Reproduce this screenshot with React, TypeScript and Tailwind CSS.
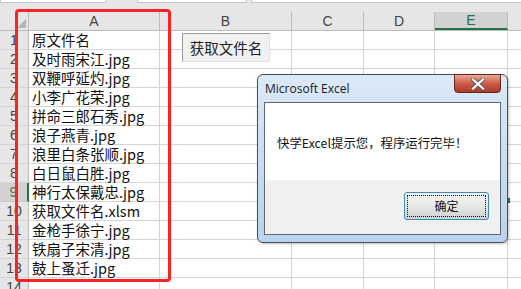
import React from 'react';

const rows = [
  '原文件名',
  '及时雨宋江.jpg',
  '双鞭呼延灼.jpg',
  '小李广花荣.jpg',
  '拼命三郎石秀.jpg',
  '浪子燕青.jpg',
  '浪里白条张顺.jpg',
  '白日鼠白胜.jpg',
  '神行太保戴忠.jpg',
  '获取文件名.xlsm',
  '金枪手徐宁.jpg',
  '铁扇子宋清.jpg',
  '鼓上蚤迁.jpg',
  '',
];

const cols = [
  { key: 'A', w: 'w-[131px]' },
  { key: 'B', w: 'w-[132px]' },
  { key: 'C', w: 'w-[72px]' },
  { key: 'D', w: 'w-[71px]' },
  { key: 'E', w: 'w-[73px]' },
];

function ColumnHeader() {
  return (
    <div className="flex h-[19px] border-b border-[#bcbcbc] bg-[#e6e6e6] text-[14px] text-[#444] font-['Liberation_Sans',sans-serif]">
      <div className="w-[29px] border-r border-[#bcbcbc] flex items-end justify-end pr-[2px] pb-[2px]">
        <svg width="9" height="9" viewBox="0 0 9 9">
          <polygon points="9,0 9,9 0,9" fill="#b4b4b4" />
        </svg>
      </div>
      {cols.map((c) =>
        c.key === 'E' ? (
          <div key={c.key} className={`${c.w} border-r border-[#bcbcbc] bg-[#d2d2d2] border-b-2 border-b-[#217346] text-[#217346] flex items-center justify-center`}>
            {c.key}
          </div>
        ) : (
          <div key={c.key} className={`${c.w} border-r border-[#bcbcbc] flex items-center justify-center`}>
            {c.key}
          </div>
        )
      )}
      <div className="flex-1" />
    </div>
  );
}

function Row({ n, text }: { n: number; text: string }) {
  const selected = n === 9;
  return (
    <div className="flex h-[19px]">
      <div
        className={
          selected
            ? "w-[29px] border-b border-[#c8c8c8] border-r-2 border-r-[#217346] bg-[#d2d2d2] text-[#52735f] flex items-center justify-center text-[14px] font-['Liberation_Sans',sans-serif]"
            : "w-[29px] border-b border-[#d4d4d4] border-r border-r-[#bcbcbc] bg-[#e6e6e6] text-[#444] flex items-center justify-center text-[14px] font-['Liberation_Sans',sans-serif]"
        }
      >
        {n}
      </div>
      <div className="w-[131px] border-r border-b border-[#d4d4d4] flex items-center pl-[3px] text-[14.5px] leading-none text-[#111] whitespace-nowrap font-['Noto_Sans_CJK_SC',sans-serif]">
        {text}
      </div>
      <div className="w-[132px] border-r border-b border-[#d4d4d4]" />
      <div className="w-[72px] border-r border-b border-[#d4d4d4]" />
      <div className="w-[71px] border-r border-b border-[#d4d4d4]" />
      <div className="w-[73px] border-r border-b border-[#d4d4d4]" />
      <div className="flex-1 border-b border-[#d4d4d4]" />
    </div>
  );
}

function MessageBox() {
  return (
    <div className="absolute left-[257px] top-[74px] w-[251px] h-[169px] rounded-[6px] border border-[#4a4f57] bg-gradient-to-b from-[#dce9f7] via-[#c9ddf2] to-[#b9d3ee] flex flex-col shadow-[1px_1px_3px_rgba(0,0,0,0.25)]">
      <div className="relative h-[27px] flex items-center pl-[7px] text-[12px] text-[#1a1a1a] font-['Open_Sans',sans-serif]">
        Microsoft Excel
        <div className="absolute right-[6px] top-[-1px] w-[47px] h-[19px] rounded-b-[4px] border border-[#6b2419] bg-gradient-to-b from-[#e8a899] via-[#cc5b47] to-[#a9392a] flex items-center justify-center">
          <svg width="14" height="12" viewBox="0 0 14 12">
            <path d="M2 1.5 L12 10.5 M12 1.5 L2 10.5" stroke="#5a5a5a" strokeWidth="4" strokeLinecap="square" />
            <path d="M2 1.5 L12 10.5 M12 1.5 L2 10.5" stroke="#ffffff" strokeWidth="2.2" strokeLinecap="square" />
          </svg>
        </div>
      </div>
      <div className="mx-[6px] mb-[7px] flex-1 border border-[#5f6770] flex flex-col">
        <div className="h-[77px] bg-white flex items-center pl-[12px] pt-[4px] text-[12.4px] text-[#111] whitespace-nowrap font-['Noto_Sans_CJK_SC',sans-serif]">
          快学Excel提示您，程序运行完毕！
        </div>
        <div className="flex-1 bg-[#f0f0f0] flex justify-end items-start pt-[12px] pr-[11px]">
          <div className="w-[85px] h-[28px] rounded-[3px] border border-[#3c8ac4] bg-gradient-to-b from-[#f4f4f4] via-[#e8e8e8] to-[#d0d0d0] p-[2px]">
            <div className="w-full h-full border border-dotted border-[#111] flex items-center justify-center text-[12px] text-[#111] font-['Noto_Sans_CJK_SC',sans-serif]">
              确定
            </div>
          </div>
        </div>
      </div>
    </div>
  );
}

export default function App() {
  return (
    <div className="relative w-[521px] h-[289px] overflow-hidden bg-white">
      <div className="h-[12px] bg-[#e6e6e6]">
        <div className="flex h-[3px] gap-[30px]">
          <div className="w-[107px] bg-white border-x border-b border-[#c6c6c6]" />
          <div className="w-[110px] bg-white border-x border-b border-[#c6c6c6]" />
          <div className="flex-1 bg-white border-l border-b border-[#c6c6c6] -ml-[26px]" />
        </div>
      </div>
      <ColumnHeader />
      {rows.map((t, i) => (
        <Row key={i} n={i + 1} text={t} />
      ))}

      {/* form button on the sheet */}
      <div className="absolute left-[182px] top-[33px] w-[88px] h-[29px] bg-[#f0f0f0] border-t border-l border-[#9a9a9a] border-r border-b border-r-[#e4e4e4] border-b-[#e4e4e4] flex items-center justify-center text-[14.5px] text-[#222] font-['Noto_Sans_CJK_SC',sans-serif]">
        获取文件名
      </div>

      {/* red highlight box */}
      <div className="absolute left-[15px] top-[9px] w-[156px] h-[273px] rounded-[4px] border-[3px] border-[#fb2323]" />

      {/* selection handle peeking out */}
      <div className="absolute left-[507px] top-[198px] w-[3px] h-[5px] bg-[#217346]" />

      <MessageBox />
    </div>
  );
}
